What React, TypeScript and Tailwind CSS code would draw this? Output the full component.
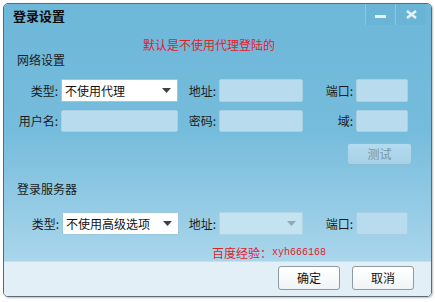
import React from 'react';

const font = { fontFamily: '"Noto Sans CJK SC", "Noto Sans", sans-serif' };

function Label({ text, w }: { text: string; w: string }) {
  return (
    <div className={`${w} shrink-0 text-right pr-[3px] text-[12px] leading-none text-[#1b1b1b]`}>
      {text}
    </div>
  );
}

function Field({ w }: { w: string }) {
  return (
    <div
      className={`${w} h-full shrink-0 rounded-[2px] bg-[#b8dcee] border border-[#a7d0e4]`}
    />
  );
}

function Select({ value, w, disabled }: { value?: string; w: string; disabled?: boolean }) {
  return (
    <div
      className={`${w} h-full shrink-0 flex items-center justify-between pl-[3px] pr-[6px] rounded-[1px] border ${
        disabled
          ? 'bg-[#c4e2f0] border-[#aed4e6]'
          : 'bg-white border-[#9bc6db]'
      }`}
    >
      <span className="text-[12px] leading-none text-[#111]">{value}</span>
      <svg width="9" height="5" viewBox="0 0 9 5">
        <path d="M0 0h9L4.5 5z" fill={disabled ? '#8fa9b6' : '#3a4248'} />
      </svg>
    </div>
  );
}

export default function App() {
  return (
    <div className="w-[435px] h-[302px] bg-white pt-[3px] pl-[3px]" style={font}>
      <div className="relative w-[429px] h-[294px] flex flex-col rounded-[5px] border border-[#5b6a74] overflow-hidden shadow-[1px_1px_2px_rgba(0,0,0,0.25)]">
        <div className="flex-1 flex flex-col bg-gradient-to-b from-[#6db7d9] via-[#76bcdc] to-[#a9d6eb]">
          {/* title bar */}
          <div className="h-[23px] flex items-center pl-[9px]">
            <span className="text-[13px] font-bold leading-none text-[#0c0c0c]">登录设置</span>
          </div>
          <div className="absolute top-0 right-[5px] flex h-[21px]">
            <div className="w-[30px] h-full flex items-center justify-center border-l border-[#8cc6e0] bg-[#6ab4d6]">
              <div className="w-[11px] h-[3px] bg-[#e6f2f8] mt-[4px]" />
            </div>
            <div className="w-[31px] h-full flex items-center justify-center border-l border-[#8cc6e0] bg-[#6ab4d6]">
              <svg width="11" height="9" viewBox="0 0 11 9">
                <path d="M1 1l9 7M10 1L1 8" stroke="#e8f3f9" strokeWidth="2.4" />
              </svg>
            </div>
          </div>

          <div className="mt-[11px] h-[14px] pl-[139px] text-[12px] leading-[14px] text-[#e1202b]">
            默认是不使用代理登陆的
          </div>
          <div className="mt-[1px] h-[14px] pl-[13px] text-[12px] leading-[14px] text-[#1b1b1b]">
            网络设置
          </div>

          <div className="mt-[12px] h-[23px] flex items-center">
            <Label text="类型:" w="w-[57px]" />
            <Select value="不使用代理" w="w-[117px]" />
            <Label text="地址:" w="w-[41px]" />
            <Field w="w-[84px]" />
            <Label text="端口:" w="w-[53px]" />
            <Field w="w-[52px]" />
          </div>

          <div className="mt-[8px] h-[22px] flex items-center">
            <Label text="用户名:" w="w-[57px]" />
            <Field w="w-[117px]" />
            <Label text="密码:" w="w-[41px]" />
            <Field w="w-[84px]" />
            <Label text="域:" w="w-[53px]" />
            <Field w="w-[52px]" />
          </div>

          <div className="mt-[11px] h-[22px] flex justify-end pr-[19px]">
            <div className="w-[65px] h-full flex items-center justify-center rounded-[3px] border border-[#8ebcd4] bg-gradient-to-b from-[#b4dbee] to-[#a5d1e7] text-[12px] text-[#7a95a4]">
              测试
            </div>
          </div>

          <div className="mt-[17px] h-[13px] pl-[13px] text-[12px] leading-[13px] text-[#1b1b1b]">
            登录服务器
          </div>

          <div className="mt-[17px] h-[23px] flex items-center">
            <Label text="类型:" w="w-[58px]" />
            <Select value="不使用高级选项" w="w-[117px]" />
            <Label text="地址:" w="w-[40px]" />
            <Select w="w-[84px]" disabled />
            <Label text="端口:" w="w-[53px]" />
            <Field w="w-[52px]" />
          </div>

          <div className="mt-[11px] h-[14px] pl-[208px] flex items-center text-[12px] leading-none text-[#e1202b]">
            <span>百度经验：</span>
            <span className="text-[10px]" style={{ fontFamily: '"Liberation Mono", monospace' }}>
              xyh666168
            </span>
          </div>
          <div className="flex-1" />
        </div>

        {/* footer */}
        <div className="h-[35px] shrink-0 flex justify-end gap-[12px] pt-[4px] pr-[17px] bg-[#e2eff7] border-t border-[#c4e1ef]">
          <div className="w-[62px] h-[24px] flex items-center justify-center rounded-[3px] border border-[#8c9aa3] bg-gradient-to-b from-white to-[#f0f4f6] text-[12px] text-[#111]">
            确定
          </div>
          <div className="w-[62px] h-[24px] flex items-center justify-center rounded-[3px] border border-[#8c9aa3] bg-gradient-to-b from-white to-[#f0f4f6] text-[12px] text-[#111]">
            取消
          </div>
        </div>
      </div>
    </div>
  );
}
